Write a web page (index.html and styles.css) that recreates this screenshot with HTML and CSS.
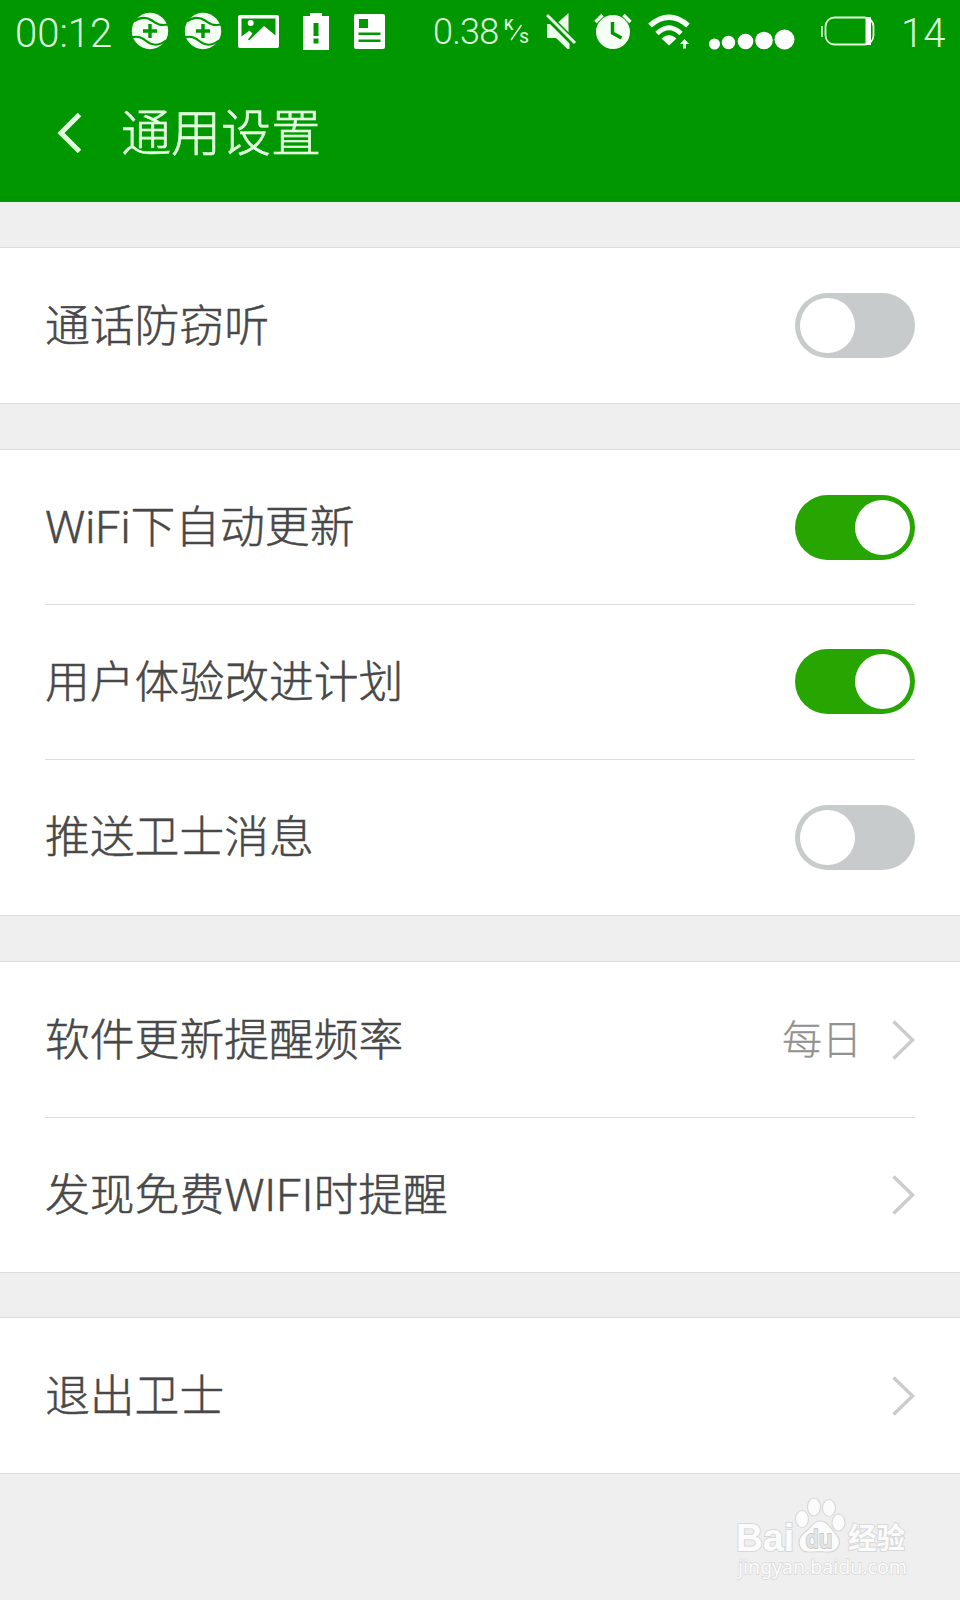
FILE: index.html
```html
<!DOCTYPE html>
<html lang="zh-CN">
<head>
<meta charset="utf-8">
<title>通用设置</title>
<link rel="stylesheet" href="styles.css">
</head>
<body>
<header class="header">
  <div class="status">
    <span class="clock">00:12</span>
    <svg class="guard" viewBox="0 0 38 38"><use href="#guard"/></svg>
    <svg class="guard second" viewBox="0 0 38 38"><use href="#guard"/></svg>
    <svg class="picture" viewBox="0 0 41 33"><rect width="41" height="33" rx="2" fill="#fff"/><path d="M3.500 3.500h34v17L26 11 11 25.500l-1-1 4.500-6-3-3-8 6z" fill="#009700"/><circle cx="12.700" cy="8" r="3" fill="#fff"/></svg>
    <svg class="alert" viewBox="0 0 26 37"><path d="M7 0h12v3h7v34H0V3h7z" fill="#fff"/><path d="M10.500 10h5v13h-5zM10.500 25.500h5v5h-5z" fill="#009700"/></svg>
    <svg class="news" viewBox="0 0 31 35"><rect width="31" height="35" rx="2" fill="#fff"/><path d="M5 5h9v9H5zM4.500 18.500h22V21h-22zM4.500 25.500h22V28h-22z" fill="#009700"/></svg>
    <span class="speed">0.38</span>
    <span class="unit"><span>K</span><svg viewBox="0 0 13 17"><path d="M1 16L11.500 1" stroke="#dfffdc" stroke-width="1.500"/></svg><span class="per">S</span></span>
    <svg class="mute" viewBox="0 0 31 36"><path d="M1 11h3L23.500 30.500V36h-2L10 25H1zM11 10.500L22.500 0v21.500z" fill="#efffed"/><path d="M1 2l28 28" stroke="#009700" stroke-width="6"/><path d="M1 2l28 28" stroke="#efffed" stroke-width="3"/></svg>
    <svg class="alarm" viewBox="0 0 38 36"><circle cx="19" cy="19" r="17" fill="#f6fff5"/><path d="M1.500 9L8.500 2M29.500 2l7 7" stroke="#efffed" stroke-width="3.500"/><path d="M18.500 9v11l9 5" fill="none" stroke="#009700" stroke-width="3.500"/></svg>
    <svg class="wifi" viewBox="0 0 42 35"><path d="M21 31.500l-7.500-7Q21 17.500 28.500 24.500z" fill="#f6fff5"/><path d="M9 19.500Q21 8 33 19.500" fill="none" stroke="#f6fff5" stroke-width="4.800"/><path d="M2 11.500Q21-5 40 11.500" fill="none" stroke="#f6fff5" stroke-width="5.500"/><path d="M36.500 25l4.500 5h-3v4.500h-3V30h-3z" fill="#f6fff5"/></svg>
    <svg class="signal" viewBox="0 0 86 21"><g fill="#fff"><circle cx="5.500" cy="15" r="5.500"/><circle cx="19.500" cy="13.500" r="6.700"/><circle cx="36.500" cy="12.500" r="7.800"/><circle cx="55" cy="11.500" r="8.800"/><circle cx="75.500" cy="10.500" r="10"/></g></svg>
    <svg class="battery" viewBox="0 0 54 30"><path d="M1 10v11" stroke="#dfffdc" stroke-width="1.500"/><rect x="4.500" y="1.500" width="48" height="27" rx="9" fill="none" stroke="#dfffdc" stroke-width="1.800"/><path d="M44.500 1h5.500v28h-5.500z" fill="#fff"/></svg>
    <span class="level">14</span>
  </div>
  <div class="titlebar">
    <svg class="back" viewBox="0 0 24 40"><path d="M22.500 1.500L4 20l18.500 18.500" fill="none" stroke="#e3ffdf" stroke-width="5"/></svg>
    <h1 class="title">通用设置</h1>
  </div>
</header>
<main class="settings">
  <section class="group">
    <div class="row"><span class="label">通话防窃听</span><span class="toggle"></span></div>
  </section>
  <section class="group three">
    <div class="row"><span class="label">WiFi下自动更新</span><span class="toggle on"></span></div>
    <div class="row"><span class="label">用户体验改进计划</span><span class="toggle on"></span></div>
    <div class="row"><span class="label">推送卫士消息</span><span class="toggle"></span></div>
  </section>
  <section class="group">
    <div class="row"><span class="label">软件更新提醒频率</span><span class="value">每日</span><svg class="chevron" viewBox="0 0 23 40"><use href="#chevron"/></svg></div>
    <div class="row"><span class="label">发现免费WIFI时提醒</span><svg class="chevron" viewBox="0 0 23 40"><use href="#chevron"/></svg></div>
  </section>
  <section class="group last">
    <div class="row"><span class="label">退出卫士</span><svg class="chevron" viewBox="0 0 23 40"><use href="#chevron"/></svg></div>
  </section>
</main>
<footer class="footer">
  <svg class="watermark" viewBox="0 0 180 90">
    <g class="mark">
      <text class="brand" x="-1" y="56" textLength="58" lengthAdjust="spacingAndGlyphs">Bai</text>
      <ellipse cx="65" cy="24" rx="6.500" ry="8.500"/>
      <ellipse cx="77" cy="12" rx="6.500" ry="9"/>
      <ellipse cx="92" cy="13" rx="6.500" ry="8.500"/>
      <ellipse cx="101.500" cy="27.500" rx="6.500" ry="8.500"/>
      <path d="M83 26C76 26 74 33 67 38C59 45 61 57 72 57C79 57 83 56 89 57C102 58 106 47 99 39C93 33 91 26 83 26Z"/>
      <text class="du" x="68.500" y="52.500" textLength="27" lengthAdjust="spacingAndGlyphs">du</text>
      <text class="cn" x="111" y="53.500" textLength="57" lengthAdjust="spacingAndGlyphs">经验</text>
      <text class="url" x="1" y="78.500" textLength="169" lengthAdjust="spacingAndGlyphs">jingyan.baidu.com</text>
    </g>
  </svg>
</footer>
<svg class="symbols">
  <symbol id="guard" viewBox="0 0 38 38"><circle cx="19" cy="19" r="18.200" fill="#f4fff3"/><path d="M3 9.500C9 4.500 16 5 21 8.500S28 14 38 12.500M0 25.500c7-2 11 0 16 4s12 4.500 19-1" fill="none" stroke="#009700" stroke-width="2.200"/><path d="M19 12v14M12 19h14" stroke="#009700" stroke-width="3.400"/></symbol>
  <symbol id="chevron" viewBox="0 0 23 40"><path d="M1.500 1.500L20.500 20l-19 18.500" fill="none" stroke="#ccc" stroke-width="3.500"/></symbol>
</svg>
</body>
</html>
```
FILE: styles.css
```css
* { box-sizing: border-box; }
body {
  margin: 0;
  height: 1600px;
  overflow: hidden;
  background: #efefef;
  font-family: Roboto, "Noto Sans CJK SC", sans-serif;
  font-weight: 300;
}
svg { display: block; flex: none; }
.symbols { position: absolute; width: 0; height: 0; }

.header { height: 202px; background: #009700; }
.status {
  display: flex;
  align-items: flex-start;
  height: 64px;
  color: #dfffdc;
  white-space: nowrap;
}
.status span { flex: none; }
.clock, .level { font-size: 40px; line-height: 47px; margin-top: 10px; }
.clock { width: 116px; padding-left: 15px; }
.guard { width: 38px; height: 38px; margin: 12px 0 0 15px; }
.second { margin-left: 15px; }
.picture { width: 41px; height: 33px; margin: 15px 0 0 16px; }
.alert { width: 26px; height: 37px; margin: 13px 0 0 24px; }
.news { width: 31px; height: 35px; margin: 14px 0 0 25px; }
.speed { width: 72px; margin: 11px 0 0 47px; font-size: 36px; line-height: 42px; letter-spacing: -.8px; padding-left: 1px; }
.unit { display: flex; width: 25px; height: 28px; margin-top: 17px; font-size: 15px; line-height: 16px; font-weight: 500; }
.unit svg { width: 13px; height: 17px; margin: 7px -4px 0 -3px; }
.unit .per { margin-top: 13px; }
.mute { width: 31px; height: 36px; margin: 13px 0 0 17px; }
.alarm { width: 38px; height: 36px; margin: 13px 0 0 17px; }
.wifi { width: 42px; height: 35px; margin: 14px 0 0 16px; }
.signal { width: 86px; height: 21px; margin: 29px 0 0 19px; }
.battery { width: 54px; height: 30px; margin: 16px 0 0 26px; }
.level { margin-left: 26px; }

.titlebar { display: flex; align-items: center; height: 138px; padding: 0 0 0 57px; }
.back { width: 24px; height: 40px; margin-top: -1px; }
.title {
  margin: 0 0 8px 40px;
  color: #e3ffdf;
  font: 300 50px/72px "Noto Sans CJK SC", sans-serif;
  -webkit-text-stroke: .6px #e3ffdf;
}

.settings { display: flex; flex-direction: column; gap: 45px; padding-top: 45px; }
.group { padding: 0 45px; background: #fff; border: solid #dcdcdc; border-width: 1px 0; }
.last { margin-top: -1px; }
.row { display: flex; align-items: center; height: 155px; }
.three .row:first-child { height: 154px; }
.three .row:last-child { height: 156px; padding-bottom: 1px; }
.row + .row { border-top: 1px solid #ddd; padding-bottom: 1px; }
.label { flex: 1; padding: 2px 0 0; color: #484848; font-size: 44.800px; line-height: 60px; -webkit-text-stroke: .5px #484848; }
.value { margin: 0 30px 5px 0; color: #929292; font-size: 40px; -webkit-text-stroke: .3px #929292; }
.chevron { width: 23px; height: 40px; }
.toggle { width: 120px; height: 65px; padding: 5px; border-radius: 33px; background: #c7cbcc; }
.toggle::before { content: ""; display: block; width: 55px; height: 55px; border-radius: 50%; background: #fff; }
.toggle.on { background: #27a500; }
.toggle.on::before { margin-left: auto; }

.footer { display: flex; justify-content: flex-end; padding: 21px 43px 0 0; }
.watermark { width: 180px; height: 90px; }
.mark { fill: #fbfbfb; stroke: #d8d8d8; stroke-width: 1.200; }
.mark text { paint-order: stroke; stroke-width: 2; font-family: "Noto Sans", "Noto Sans CJK SC", sans-serif; }
.mark .brand { font-family: "Liberation Sans", sans-serif; font-size: 38px; font-weight: 700; }
.mark .du { font-size: 25px; font-weight: 600; fill: #e4e4e4; stroke: #ccc; }
.mark .cn { font-size: 29px; font-weight: 700; }
.mark .url { font-size: 20px; font-weight: 400; stroke-width: 1.500; }
```
